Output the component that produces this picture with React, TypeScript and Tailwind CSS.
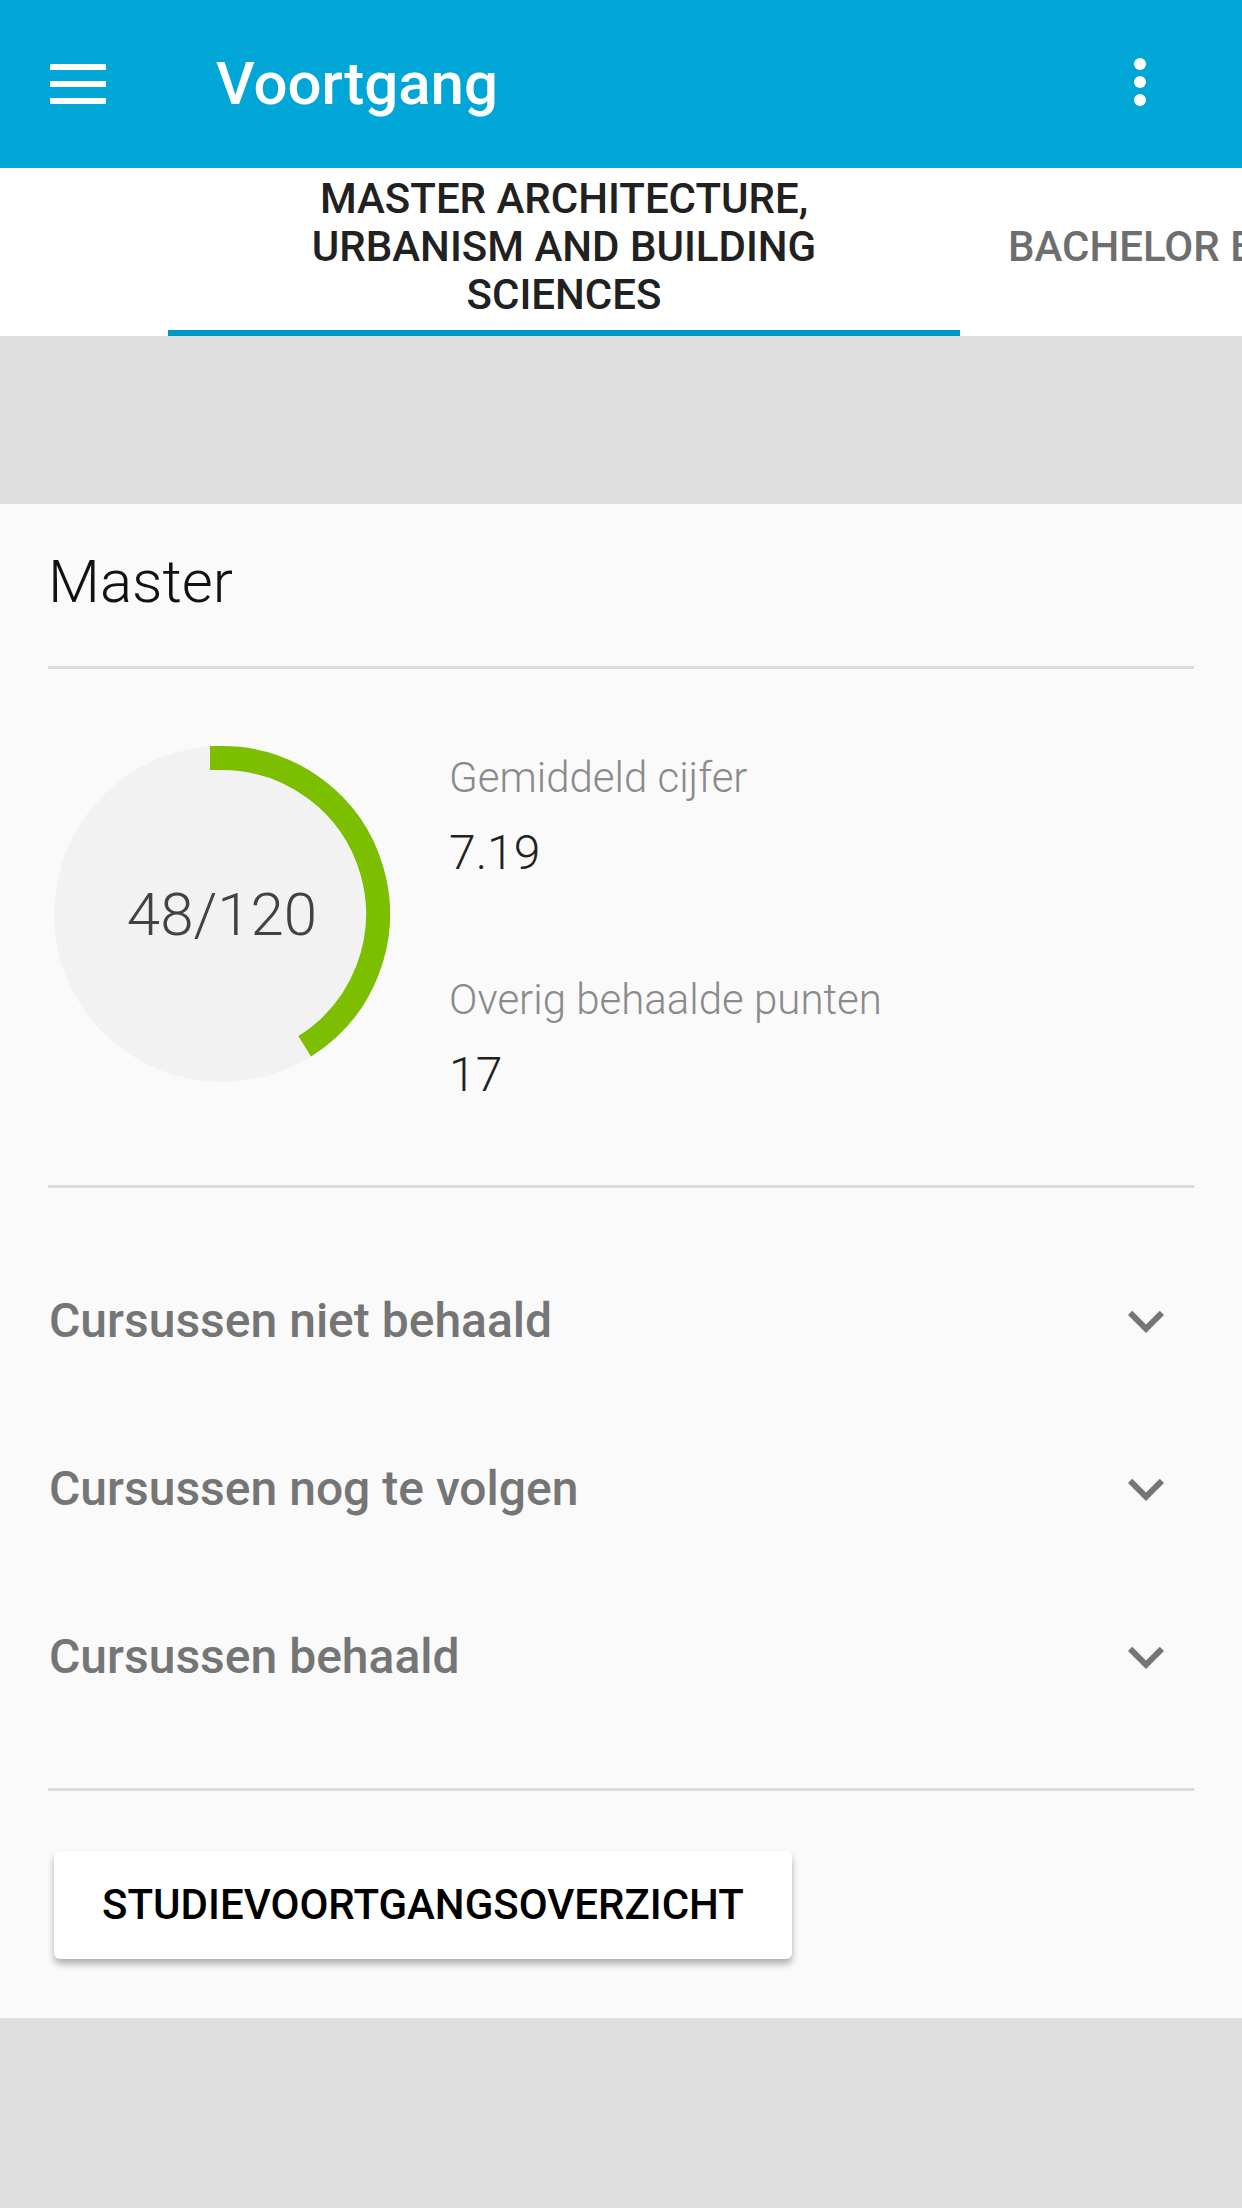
import React from "react";

function Chevron() {
  return (
    <svg width="72" height="72" viewBox="0 0 24 24" className="mr-[12px] shrink-0">
      <path d="M16.59 8.59L12 13.17 7.41 8.59 6 10l6 6 6-6z" fill="#757575" />
    </svg>
  );
}

function Ring() {
  const cx = 168;
  const cy = 168;
  const r = 156;
  const end = (148 * Math.PI) / 180;
  const ex = cx + r * Math.sin(end);
  const ey = cy - r * Math.cos(end);
  return (
    <div className="relative w-[336px] h-[336px] ml-[6px] shrink-0">
      <svg width="336" height="336" viewBox="0 0 336 336" className="absolute inset-0">
        <circle cx={cx} cy={cy} r={168} fill="#f2f2f2" />
        <path
          d={`M ${cx} ${cy - r} A ${r} ${r} 0 0 1 ${ex.toFixed(2)} ${ey.toFixed(2)}`}
          fill="none"
          stroke="#7cbf00"
          strokeWidth="24"
        />
        <rect x="156" y="0" width="12.5" height="24" fill="#7cbf00" />
      </svg>
      <div className="absolute inset-0 flex items-center justify-center">
        <span className="text-[60px] leading-none font-light text-[#424242] mt-[2px]">48/120</span>
      </div>
    </div>
  );
}

function Row({ label }: { label: string }) {
  return (
    <div className="h-[168px] flex items-center justify-between">
      <span className="text-[48px] leading-none font-medium text-[#757575] ml-[1px]">{label}</span>
      <Chevron />
    </div>
  );
}

export default function App() {
  return (
    <div
      className="w-[1242px] h-[2208px] bg-[#dedede] overflow-hidden"
      style={{ fontFamily: "Roboto, 'Noto Sans', sans-serif" }}
    >
      {/* App bar */}
      <div className="h-[168px] bg-[#00a6d6] flex items-center">
        <div className="ml-[50px] w-[56px] flex flex-col gap-[11px]">
          <div className="h-[6px] bg-white" />
          <div className="h-[6px] bg-white" />
          <div className="h-[6px] bg-white" />
        </div>
        <div className="ml-[110px] text-white text-[60px] leading-none font-medium">Voortgang</div>
        <div className="ml-auto mr-[96px] mb-[4px] flex flex-col gap-[6px]">
          <div className="w-[12px] h-[12px] rounded-full bg-white" />
          <div className="w-[12px] h-[12px] rounded-full bg-white" />
          <div className="w-[12px] h-[12px] rounded-full bg-white" />
        </div>
      </div>

      {/* Tabs */}
      <div className="h-[168px] bg-white flex overflow-hidden">
        <div className="ml-[168px] w-[792px] shrink-0 h-full flex flex-col items-center">
          <div className="pt-[7px] text-center text-[42px] leading-[48px] font-medium text-[#212121]">
            MASTER ARCHITECTURE,
            <br />
            URBANISM AND BUILDING
            <br />
            SCIENCES
          </div>
          <div className="mt-auto w-full h-[6px] bg-[#0097c4]" />
        </div>
        <div className="shrink-0 pl-[48px] pt-[55px]">
          <span className="whitespace-nowrap text-[42px] leading-[48px] font-medium text-[#6e6e6e]">
            BACHELOR BOUWKUNDE
          </span>
        </div>
      </div>

      {/* Gray gap */}
      <div className="h-[168px]" />

      {/* Card */}
      <div className="bg-[#fafafa] h-[1514px] px-[48px] pt-[48px]">
        <div className="text-[60px] leading-none font-light text-[#111111]">Master</div>
        <div className="mt-[54px] h-[3px] bg-[#dcdcdc]" />

        <div className="mt-[77px] flex items-start">
          <Ring />
          <div className="ml-[59px] pt-[11px] flex flex-col">
            <div className="text-[42px] leading-[42px] font-light text-[#8a8a8a]">Gemiddeld cijfer</div>
            <div className="mt-[30px] text-[48px] leading-[48px] font-light text-[#212121]">7.19</div>
            <div className="mt-[102px] text-[42px] leading-[42px] font-light text-[#8a8a8a]">
              Overig behaalde punten
            </div>
            <div className="mt-[30px] text-[48px] leading-[48px] font-light text-[#212121]">17</div>
          </div>
        </div>

        <div className="mt-[86px] h-[3px] bg-[#dcdcdc]" />

        <div className="pt-[49px] pb-[47px] flex flex-col">
          <Row label="Cursussen niet behaald" />
          <Row label="Cursussen nog te volgen" />
          <Row label="Cursussen behaald" />
        </div>

        <div className="h-[3px] bg-[#dcdcdc]" />

        <div className="mt-[60px] ml-[6px] w-[738px] h-[108px] bg-white rounded-[6px] shadow-[0_5px_7px_rgba(0,0,0,0.3)] flex items-center justify-center">
          <span className="text-[42px] leading-none font-medium text-black">STUDIEVOORTGANGSOVERZICHT</span>
        </div>
      </div>
    </div>
  );
}
